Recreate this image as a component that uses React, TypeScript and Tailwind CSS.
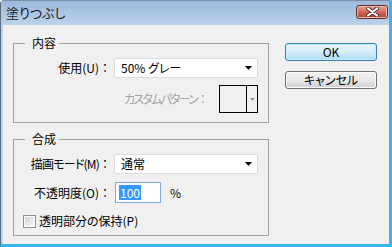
import React from 'react';

function Arrow() {
  return (
    <svg width="7" height="4" viewBox="0 0 7 4">
      <path d="M0 0h7L3.5 4z" fill="#000" />
    </svg>
  );
}

function Select({ value }: { value: string }) {
  return (
    <div className="w-[144px] h-[20px] bg-white border border-[#dcdcdc] flex items-center justify-between pl-[6px] pr-[5px]">
      <span>{value}</span>
      <Arrow />
    </div>
  );
}

// full-width colon keeps its side spacing, like the original UI font
function Colon() {
  return <span className="[font-feature-settings:normal] tracking-normal">：</span>;
}

function CloseButton() {
  return (
    <div className="w-[32px] h-[14px] mt-[4px] rounded-[3px] border border-[#6b2b2b] bg-gradient-to-b from-[#e3a79e] via-[#cf6a5c] to-[#b83c2e] flex items-center justify-center shadow-[inset_0_0_0_1px_#e9b8b0]">
      <svg width="13" height="10" viewBox="0 0 13 10">
        <path d="M2 1.5L11 8.5M11 1.5L2 8.5" stroke="#5a2a2a" strokeWidth="4" strokeLinecap="round" />
        <path d="M2 1.5L11 8.5M11 1.5L2 8.5" stroke="#fff" strokeWidth="2.2" strokeLinecap="round" />
      </svg>
    </div>
  );
}

export default function App() {
  return (
    <div className="w-[392px] h-[247px] flex flex-col bg-[#b9d0ea] border-l border-t border-l-[#5d6c7d] border-t-[#7d8ea3] border-r-[3px] border-b-[3px] border-r-[#38b5ec] border-b-[#38b5ec] rounded-tl-[4px] font-['Noto_Sans_CJK_JP',sans-serif] [font-feature-settings:'palt'] text-[12px] leading-[16px] text-black">
      {/* title bar */}
      <div className="h-[24px] flex items-start justify-between pl-[5px] pr-[1px] bg-gradient-to-b from-[#9db9da] to-[#bcd2eb]">
        <span className="text-[13px] leading-[24px] text-[#1b1b1b]">塗りつぶし</span>
        <CloseButton />
      </div>

      {/* client area */}
      <div className="flex-1 ml-[2px] bg-[#f0f0f0] flex items-start pl-[10px] pt-[10px]">
        <div className="w-[256px] flex flex-col gap-[8px]">
          <fieldset className="border border-[#a0a0a0] pr-[10px] pb-[9px]">
            <legend className="ml-[11px] pl-[7px] pr-[3px] leading-[16px]">内容</legend>
            <div className="flex items-center mt-[7px]">
              <div className="w-[97px] text-right">使用(U)<Colon /></div>
              <div className="ml-[3px]">
                <Select value="50% グレー" />
              </div>
            </div>
            <div className="flex items-center justify-end mt-[7px]">
              <span className="text-[#a3a3a3] tracking-[-1.8px]">カスタムパターン<Colon /></span>
              <div className="ml-[10px] w-[39px] h-[28px] border border-black flex">
                <div className="flex-1" />
                <div className="w-[11px] border-l border-black flex items-center justify-center">
                  <svg width="5" height="3" viewBox="0 0 5 3">
                    <path d="M0 0h5L2.5 3z" fill="#9a9a9a" />
                  </svg>
                </div>
              </div>
            </div>
          </fieldset>

          <fieldset className="border border-[#a0a0a0] pr-[10px] pb-[6px]">
            <legend className="ml-[11px] pl-[7px] pr-[3px] leading-[16px]">合成</legend>
            <div className="flex items-center mt-[7px]">
              <div className="w-[97px] text-right tracking-[-0.8px]">描画モード(M)<Colon /></div>
              <div className="ml-[3px]">
                <Select value="通常" />
              </div>
            </div>
            <div className="flex items-center mt-[8px]">
              <div className="w-[97px] text-right">不透明度(O)<Colon /></div>
              <div className="ml-[4px] w-[46px] h-[21px] bg-white border border-[#7fa9d6] flex items-center pl-[3px]">
                <span className="bg-[#3399ff] text-white px-[1px] leading-[15px]">100</span>
              </div>
              <span className="ml-[9px]">%</span>
            </div>
            <div className="flex items-center mt-[10px]">
              <div className="ml-[9px] w-[13px] h-[13px] border border-[#8e8f8f] bg-white p-[1px]">
                <div className="w-full h-full bg-gradient-to-br from-[#d6d6d6] to-[#f6f6f6]" />
              </div>
              <span className="ml-[3px]">透明部分の保持(P)</span>
            </div>
          </fieldset>
        </div>

        <div className="ml-[16px] pt-[8px] flex flex-col gap-[10px]">
          <button className="w-[92px] h-[18px] rounded-[3px] border border-[#3c7fb1] bg-gradient-to-b from-[#eaf6fd] via-[#d5eefc] to-[#a9daf5] shadow-[inset_0_0_0_1px_#c4ecfc] flex items-center justify-center leading-[16px]">
            OK
          </button>
          <button className="w-[92px] h-[18px] rounded-[3px] border border-[#707070] bg-gradient-to-b from-[#f2f2f2] via-[#e8e8e8] to-[#cfcfcf] shadow-[inset_0_0_0_1px_#fcfcfc] flex items-center justify-center leading-[16px]">
            キャンセル
          </button>
        </div>
      </div>
    </div>
  );
}
